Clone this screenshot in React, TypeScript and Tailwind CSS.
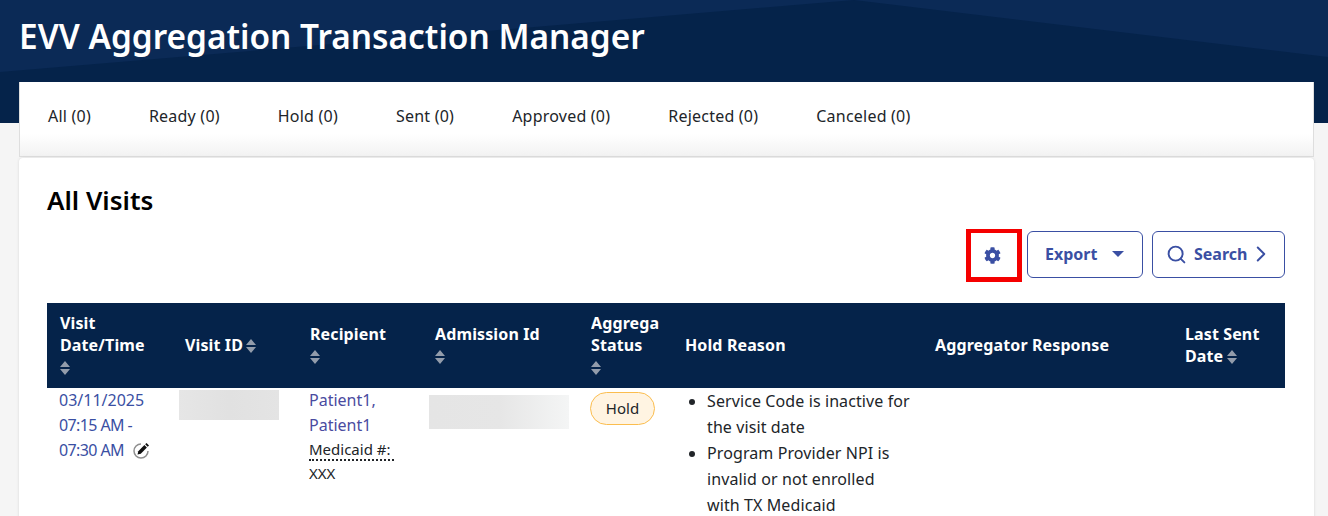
import { FaCog } from "react-icons/fa";
import { Search, ChevronRight } from "lucide-react";

function Sort({ className = "" }: { className?: string }) {
  return (
    <svg width="10" height="14" viewBox="0 0 10 14" className={`inline-block align-[-2px] ${className}`}>
      <path d="M5 0 L10 6 L0 6 Z M0 8 L10 8 L5 14 Z" fill="#939cab" />
    </svg>
  );
}

const tabs = ["All (0)", "Ready (0)", "Hold (0)", "Sent (0)", "Approved (0)", "Rejected (0)", "Canceled (0)"];
const th = "px-[13px] pt-0 pb-[2px] text-left align-middle font-bold text-white leading-[22px] tracking-[0.12px]";

export default function App() {
  return (
    <div className="h-[516px] overflow-hidden bg-[#f5f5f5] text-[16px] text-[#212529] font-['Noto_Sans',sans-serif]">
      <header className="relative h-[123px] bg-[#0b2a56]">
        <svg className="absolute inset-0" width="1328" height="123" viewBox="0 0 1328 123">
          <path d="M0 72 L854 0 L1328 57 L1328 123 L0 123 Z" fill="#05234a" />
        </svg>
        <h1 className="relative pl-[19px] pt-[14px] text-[33.4px] leading-[44px] font-semibold text-white">
          EVV Aggregation Transaction Manager
        </h1>
      </header>

      <nav className="relative -mt-[41px] ml-[19px] mr-[14px] flex h-[75px] items-start gap-[58px] border-x border-b border-[#dedede] bg-gradient-to-b from-white from-70% to-[#f2f2f2] pl-[28px] pt-[22px] tracking-[0.22px] text-[#212529]">
        {tabs.map((t) => (
          <span key={t} className="leading-[24px]">{t}</span>
        ))}
      </nav>

      <main className="relative mr-[14px] ml-[19px] mt-px h-[400px] overflow-hidden rounded-t-[4px] bg-white px-[28px] pt-[24px] shadow-[0_0_3px_rgba(0,0,0,0.12)]">
        <h2 className="text-[26px] leading-[36px] font-semibold text-black">All Visits</h2>

        <div className="mt-[13px] mr-px flex h-[47px] items-start justify-end text-[#3a4fa3]">
          <button className="mr-[5px] -mt-[2px] flex h-[53px] w-[56px] items-center justify-center border-x-[5px] border-t-[4px] border-b-[5px] border-[#f50000] bg-white pr-[4px]">
            <FaCog className="text-[#3a4fa3]" size={17} />
          </button>
          <button className="flex h-[47px] w-[116px] items-center rounded-[6px] border border-[#3a4fa3] pb-[2px] pl-[17px] font-bold">
            Export
            <svg width="12" height="6" viewBox="0 0 12 6" className="ml-[15px] mt-[1px]"><path d="M0 0 L12 0 L6 6 Z" fill="#3a4fa3" /></svg>
          </button>
          <button className="ml-[9px] flex h-[47px] w-[133px] items-center rounded-[6px] border border-[#3a4fa3] pb-[2px] pl-[13px] font-bold">
            <Search size={21} strokeWidth={2.2} className="mr-[7px] mt-[1px]" />
            Search
            <ChevronRight size={26} strokeWidth={1.8} className="ml-[1px] mt-[1px]" />
          </button>
        </div>

        <table className="mt-[25px] w-[1238px] table-fixed border-collapse">
          <colgroup>
            <col className="w-[125px]" /><col className="w-[125px]" /><col className="w-[125px]" /><col className="w-[156px]" />
            <col className="w-[94px]" /><col className="w-[250px]" /><col className="w-[250px]" /><col className="w-[113px]" />
          </colgroup>
          <thead>
            <tr className="h-[85px] bg-[#05234a]">
              <th className={th}>Visit<br />Date/Time<br /><Sort /></th>
              <th className={th}>Visit ID <Sort className="-ml-[1px]" /></th>
              <th className={th}>Recipient<br /><Sort /></th>
              <th className={th}>Admission Id<br /><Sort /></th>
              <th className={th}><span className="block overflow-hidden whitespace-nowrap">Aggregator</span>Status<br /><Sort /></th>
              <th className={th}>Hold Reason</th>
              <th className={th}>Aggregator Response</th>
              <th className={th}>Last Sent<br />Date <Sort className="-ml-[1px]" /></th>
            </tr>
          </thead>
          <tbody>
            <tr className="align-top leading-[25px]">
              <td className="px-[12px] pt-0">
                <div className="text-[#3a4fa3]">
                  <div>03/11/2025</div>
                  <div className="tracking-[-0.6px]">07:15 AM -</div>
                  <div className="flex items-center tracking-[-0.6px]">
                    07:30 AM
                    <svg width="17" height="17" viewBox="0 0 17 17" className="ml-[9px] -mt-[1px]">
                      <path d="M15 9 A7 7 0 1 1 8 2" fill="none" stroke="#8f8f8f" strokeWidth="1.5" />
                      <path d="M4.5 12.5 L5.3 9.2 L11.4 3.1 L13.9 5.6 L7.8 11.7 Z" fill="#111" />
                      <path d="M12.2 2.3 L13.5 1 L16 3.5 L14.7 4.8 Z" fill="#111" />
                    </svg>
                  </div>
                </div>
              </td>
              <td className="px-[7px] pt-[2px]">
                <div className="h-[30px] w-[100px] bg-gradient-to-r from-[#e6e6e6] via-[#e1e1e1] to-[#e4e4e4]" />
              </td>
              <td className="px-[12px]">
                <div className="text-[#4a4ba0]">Patient1,<br />Patient1</div>
                <div className="mt-[2px] w-fit border-b-2 border-dotted border-[#212529] pr-[4px] text-[15px] leading-[19px]">Medicaid #:</div>
                <div className="text-[15px] leading-[24px]">XXX</div>
              </td>
              <td className="px-[7px] pt-[7px]">
                <div className="h-[34px] w-[140px] bg-gradient-to-r from-[#e5e5e5] via-[#e6e6e6] to-[#f4f5f5]" />
              </td>
              <td className="px-[12px] pt-[4px]">
                <span className="flex h-[33px] w-[65px] items-center justify-center rounded-full border border-[#fbbd4e] bg-[#fff4e2] text-[15px]">Hold</span>
              </td>
              <td className="pl-[13px] pr-[11px] pt-0">
                <ul className="list-disc pl-[22px] leading-[26px] tracking-[0.1px]">
                  <li>Service Code is inactive for the visit date</li>
                  <li>Program Provider NPI is invalid or not enrolled with TX Medicaid</li>
                </ul>
              </td>
              <td />
              <td />
            </tr>
          </tbody>
        </table>
      </main>
    </div>
  );
}
